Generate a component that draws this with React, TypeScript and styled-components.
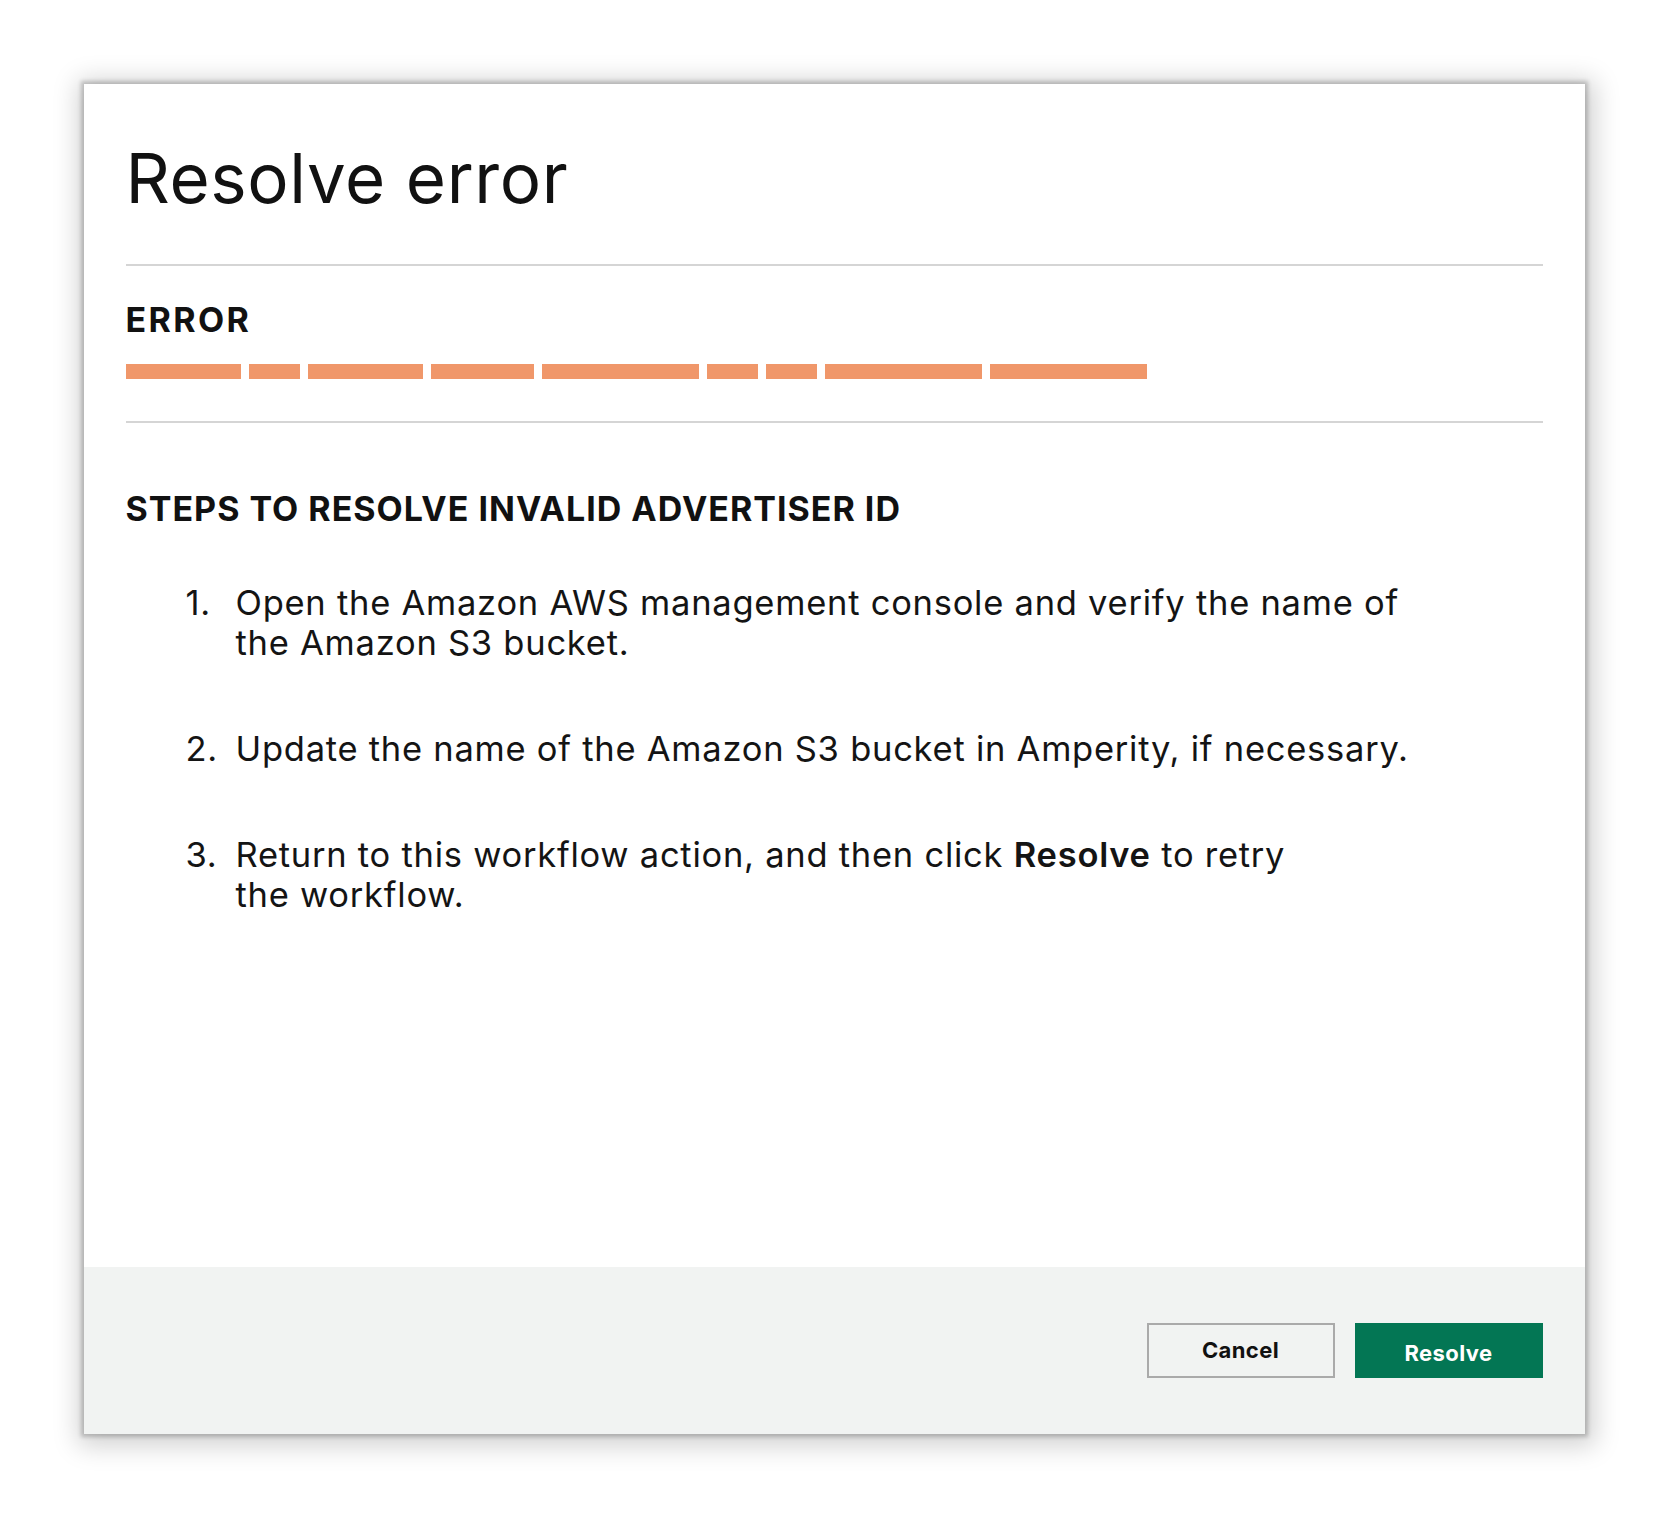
import styled, { createGlobalStyle } from "styled-components";

const GlobalStyle = createGlobalStyle`
  html, body {
    margin: 0;
    padding: 0;
    background: #ffffff;
  }

  body {
    font-family: Inter, "Liberation Sans", sans-serif;
    color: #141414;
  }
`;

const Page = styled.div`
  display: flex;
  justify-content: center;
  padding-top: 84px;
  min-height: 1518px;
  box-sizing: border-box;
`;

const Dialog = styled.div`
  width: 1501px;
  height: 1350px;
  background: #ffffff;
  display: flex;
  flex-direction: column;
  box-shadow: 0 0 4px 3px rgba(0, 0, 0, 0.2),
    2px 4px 24px 8px rgba(0, 0, 0, 0.18);
`;

const Body = styled.div`
  flex: 1;
  padding: 0 42px;
`;

const Title = styled.h1`
  margin: 54px 0 46px;
  font-size: 69px;
  line-height: 80px;
  font-weight: 400;
  letter-spacing: 0.6px;
  color: #111111;
`;

const Divider = styled.hr`
  margin: 0;
  border: 0;
  height: 2px;
  background: #d5d5d5;
`;

const ErrorSection = styled.section`
  padding: 34px 0 42px;
`;

const Label = styled.h2`
  margin: 0;
  font-size: 34px;
  line-height: 40px;
  font-weight: 700;
  letter-spacing: 2.4px;
  color: #111111;
`;

const Redacted = styled.div`
  display: flex;
  gap: 8px;
  margin-top: 24px;
`;

const Dash = styled.span<{ $w: number }>`
  display: block;
  width: ${(p) => p.$w}px;
  height: 15px;
  background: #f0976a;
`;

const StepsHeading = styled(Label)`
  margin-top: 66px;
  letter-spacing: 1px;
`;

const StepList = styled.ol`
  list-style: none;
  margin: 54px 0 0;
  padding: 0 0 0 60px;
  display: flex;
  flex-direction: column;
  gap: 66px;
`;

const StepItem = styled.li`
  display: grid;
  grid-template-columns: 50px 1fr;
  font-size: 34.5px;
  line-height: 40px;
  letter-spacing: 0.75px;
  color: #141414;

  & b {
    font-weight: 600;
  }
`;

const Footer = styled.div`
  background: #f1f3f2;
  padding: 56px 42px 56px;
  display: flex;
  justify-content: flex-end;
  gap: 20px;
`;

const Button = styled.button<{ $primary?: boolean }>`
  width: 188px;
  height: 55px;
  box-sizing: border-box;
  font-family: Inter, "Liberation Sans", sans-serif;
  font-size: 22px;
  font-weight: 700;
  letter-spacing: 0.4px;
  cursor: pointer;
  border: ${(p) => (p.$primary ? "none" : "2px solid #aaaaaa")};
  background: ${(p) => (p.$primary ? "#037654" : "transparent")};
  color: ${(p) => (p.$primary ? "#ffffff" : "#111111")};
  padding: ${(p) => (p.$primary ? "4px 0 0" : "0 0 2px")};
`;

const dashes = [115, 51, 115, 103, 157, 51, 51, 157, 157];

export default function App() {
  return (
    <>
      <GlobalStyle />
      <Page>
        <Dialog>
          <Body>
            <Title>Resolve error</Title>
            <Divider />
            <ErrorSection>
              <Label>ERROR</Label>
              <Redacted>
                {dashes.map((w, i) => (
                  <Dash key={i} $w={w} />
                ))}
              </Redacted>
            </ErrorSection>
            <Divider />
            <StepsHeading>STEPS TO RESOLVE INVALID ADVERTISER ID</StepsHeading>
            <StepList>
              <StepItem>
                <span>1.</span>
                <span>
                  Open the Amazon AWS management console and verify the name of
                  <br />
                  the Amazon S3 bucket.
                </span>
              </StepItem>
              <StepItem>
                <span>2.</span>
                <span>
                  Update the name of the Amazon S3 bucket in Amperity, if
                  necessary.
                </span>
              </StepItem>
              <StepItem>
                <span>3.</span>
                <span>
                  Return to this workflow action, and then click <b>Resolve</b>{" "}
                  to retry
                  <br />
                  the workflow.
                </span>
              </StepItem>
            </StepList>
          </Body>
          <Footer>
            <Button>Cancel</Button>
            <Button $primary>Resolve</Button>
          </Footer>
        </Dialog>
      </Page>
    </>
  );
}
